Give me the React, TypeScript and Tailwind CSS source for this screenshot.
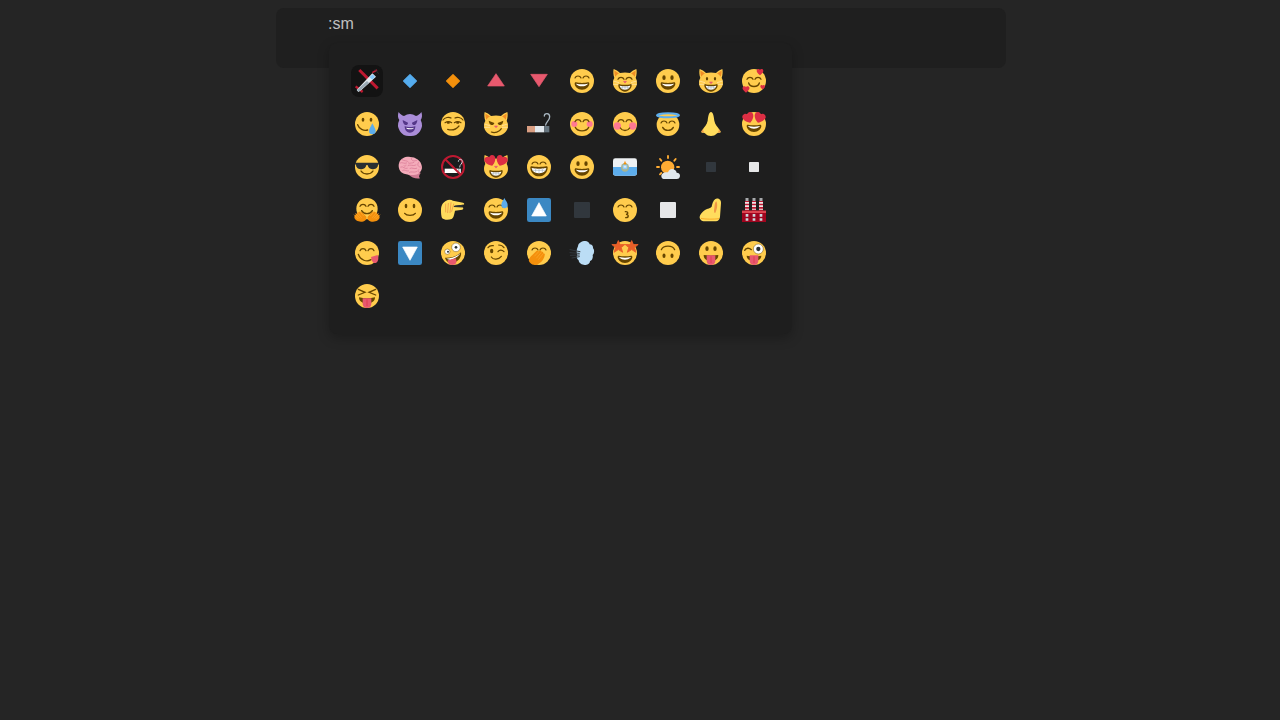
import React from "react";

const Y = "#FFCC4D";
const D = "#664500";
const R = "#DD2E44";

function S({ children }: { children: React.ReactNode }) {
  return (
    <svg viewBox="0 0 36 36" className="w-6 h-6 block overflow-visible">
      {children}
    </svg>
  );
}

const Face = () => <circle cx="18" cy="18" r="18" fill={Y} />;
const Eyes = ({ y = 13, rx = 2.5, ry = 3.5 }: { y?: number; rx?: number; ry?: number }) => (
  <>
    <ellipse cx="12" cy={y} rx={rx} ry={ry} fill={D} />
    <ellipse cx="24" cy={y} rx={rx} ry={ry} fill={D} />
  </>
);
const Arch = ({ y = 15, c = D, w = 1.8 }: { y?: number; c?: string; w?: number }) => (
  <g fill="none" stroke={c} strokeWidth={w} strokeLinecap="round">
    <path d={`M7.5 ${y + 1.5}C9 ${y - 2.5} 15 ${y - 2.5} 16.5 ${y + 1.5}`} />
    <path d={`M19.5 ${y + 1.5}C21 ${y - 2.5} 27 ${y - 2.5} 28.5 ${y + 1.5}`} />
  </g>
);
const Grin = ({ t = 0 }: { t?: number }) => (
  <g transform={`translate(0 ${t})`}>
    <path fill={D} d="M18 21c-3.623 0-6.027-.422-9-1-.679-.131-2 0-2 2 0 4 4.595 9 11 9 6.404 0 11-5 11-9 0-2-1.321-2.132-2-2-2.973.578-5.377 1-9 1z" />
    <path fill="#FFF" d="M9 22s3 1 9 1 9-1 9-1-2 4-9 4-9-4-9-4z" />
  </g>
);
const Smile = ({ d = "M9 22C12 29 24 29 27 22" }: { d?: string }) => (
  <path d={d} fill="none" stroke={D} strokeWidth="2" strokeLinecap="round" />
);
const Tongue = ({ x = 18, y = 25 }: { x?: number; y?: number }) => (
  <g transform={`translate(${x} ${y})`}>
    <path fill="#E8596E" d="M-6.5 -3.5L6.5 -3.5L6.5 5C6.5 8.5 3.5 11 0 11S-6.5 8.5 -6.5 5Z" />
    <path fill="#DD2E44" d="M-.5 -2H.5V8H-.5Z" />
  </g>
);
const HeartEyes = () => (
  <g fill={R}>
    <path d="M16.65 3.281C15.791.85 13.126-.426 10.694.431c-1.476.52-2.521 1.711-2.928 3.104-1.191-.829-2.751-1.1-4.225-.58C1.111 3.813-.167 6.48.692 8.911c.122.344.284.663.472.958 1.951 3.582 7.588 6.1 11.001 6.131 2.637-2.167 5.446-7.665 4.718-11.677-.038-.348-.113-.698-.233-1.042z" />
    <path d="M19.35 3.281C20.209.85 22.875-.426 25.306.431c1.476.52 2.521 1.711 2.929 3.104 1.191-.829 2.751-1.1 4.225-.58 2.43.858 3.707 3.525 2.85 5.956-.123.344-.284.663-.473.958-1.951 3.582-7.588 6.1-11 6.131-2.638-2.167-5.447-7.665-4.719-11.677.038-.348.113-.698.232-1.042z" />
  </g>
);
const Heart = ({ x, y, s }: { x: number; y: number; s: number }) => (
  <path
    transform={`translate(${x} ${y}) scale(${s}) translate(-5 -5)`}
    fill={R}
    d="M5 10C1.5 7 0 5.2 0 3.2A2.8 2.8 0 0 1 5 1.6A2.8 2.8 0 0 1 10 3.2C10 5.2 8.5 7 5 10Z"
  />
);
const Cat = ({ whisk = true }: { whisk?: boolean }) => (
  <>
    <path fill={Y} d="M35 0C36 4 35.500 9 34 13.500 35.300 15.500 36 18 36 21 36 29 28 36 18 36S0 29 0 21C0 18 .7 15.500 2 13.500 .5 9 0 4 1 0 4 1 8 3.500 10.500 6 15 4.800 21 4.800 25.500 6 28 3.500 32 1 35 0Z" />
    <path fill="#F18F26" d="M2.200 2.200C4 3.400 7 5 9 6.800 7 7.800 4.800 9.500 3.500 11.500 2.500 9 1.800 5 2.200 2.200ZM33.800 2.200C32 3.400 29 5 27 6.800 29 7.800 31.200 9.500 32.500 11.500 33.500 9 34.200 5 33.800 2.200Z" />
    {whisk && (
      <path fill="none" stroke="#FFE8B6" strokeWidth="1" d="M.5 18L9 20.500M.2 23L9 23M27 20.500L35.500 18M27 23L35.800 23" />
    )}
  </>
);
const Nose = ({ y = 19 }: { y?: number }) => <path fill="#E75A70" d={`M15.8 ${y}H20.200L18 ${y + 2.600}Z`} stroke="#E75A70" strokeLinejoin="round" />;
const CatGrin = () => (
  <>
    <path fill={D} d="M18 23.500c-3.500 0-6-.300-8.500-.800-.700-.100-1.500.300-1.500 1.800C8 29 12.500 34 18 34s10-5 10-9.500c0-1.500-.800-1.900-1.500-1.800-2.500.500-5 .800-8.500.800z" />
    <path fill="#FFF" d="M10 25s3 .900 8 .900 8-.900 8-.900-1.500 6-8 6-8-6-8-6z" />
    <path fill="none" stroke="#99AAB5" strokeWidth=".7" d="M10.500 28h15M14 25.500v5M18 25.500v5.500M22 25.500v5" />
  </>
);
const FingerHand = ({ x, flip = false }: { x: number; flip?: boolean }) => (
  <g transform={`translate(${x} 0) scale(${flip ? -1 : 1} 1)`}>
    <path fill="#F4900C" d="M0 35.500C-5 35.500-9.500 33-10 29-10 26-6 22.500-3 21-1 20 2 21 3 23L8 28C9 33 5 35.500 0 35.500Z" />
    <path fill="none" stroke="#FFAC33" strokeWidth="1" d="M-10.500 25L-4 31.500M-8.500 23L-1.500 30.500M-6 21L1 29.500M-2 20L4 27" />
  </g>
);
const Star = ({ x, y, s = 1 }: { x: number; y: number; s?: number }) => (
  <path
    transform={`translate(${x} ${y}) scale(${s})`}
    fill="#E95F28"
    stroke="#E95F28"
    strokeLinejoin="round"
    d="M0 -7L2 -2.400 7.500 -2.500 3.300 1 5 6.500 0 3.400-5 6.500-3.300 1-7.500-2.500-2-2.400Z"
  />
);

const emojis: React.ReactNode[] = [
  <S>
    <path stroke="#BE1931" strokeWidth="4.500" d="M6.500 1.500L34 29" fill="none" />
    <path stroke="#BE1931" strokeWidth="3.500" d="M1 26L11.500 34.500" fill="none" />
    <path fill="#E1E8ED" d="M26 6.500L31.500 11.500 10 31 5 34.500 2.500 31.500Z" />
    <path fill="#99AAB5" d="M3 31.500L18 18 21 21 5.500 34Z" />
    <path fill="#88C9F9" d="M26.500 8L30 11.500 26 16 21.500 12.500Z" />
    <path stroke="#BE1931" strokeWidth="2.400" d="M26 5.500L33 1.500" fill="none" />
    <path stroke="#292F33" strokeWidth="1.400" d="M30 .5L35.500 7" fill="none" />
  </S>,
  <S><path fill="#55ACEE" stroke="#55ACEE" strokeWidth="2" strokeLinejoin="round" d="M18 8.500L27.500 18 18 27.500 8.500 18Z" /></S>,
  <S><path fill="#F4900C" stroke="#F4900C" strokeWidth="2" strokeLinejoin="round" d="M18 8.500L27.500 18 18 27.500 8.500 18Z" /></S>,
  <S><path fill="#E8596E" stroke="#E8596E" strokeWidth="1" strokeLinejoin="round" d="M18 7L30.500 25.500H5.500Z" /></S>,
  <S><path fill="#E8596E" stroke="#E8596E" strokeWidth="1" strokeLinejoin="round" d="M18 26.500L30.500 8H5.500Z" /></S>,
  <S><Face /><Arch y={12} /><Grin /></S>,
  <S><Cat /><Arch y={14} /><Nose y={18.500} /><CatGrin /></S>,
  <S><Face /><Eyes /><Grin /></S>,
  <S><Cat /><Eyes y={14.500} rx={1.700} ry={2.600} /><Nose y={19.500} /><CatGrin /></S>,
  <S><Face /><Arch y={14} /><Smile d="M10 21C12 28 24 28 26 21" /><Heart x={27} y={4.500} s={1} /><Heart x={6} y={30.500} s={1.050} /><Heart x={31} y={27} s={0.700} /></S>,
  // row 2
  <S>
    <Face />
    <Eyes y={11.500} rx={2} ry={3} />
    <path d="M4 19C6 25 13 29 19 27" fill="none" stroke={D} strokeWidth="2" strokeLinecap="round" />
    <path fill="#5DADEC" d="M26 17C23 23 21 26 21 28.500A5 5 0 0 0 31 28.500C31 26 28.500 22 26 17Z" />
  </S>,
  <S>
    <path fill="#AA8DD8" d="M1 0C-.5 4-.5 9 2 12A16.500 16.500 0 0 0 18 36 16.500 16.500 0 0 0 34 12C36.500 9 36.500 4 35 0 33 3 30 5.500 27 6A16.500 16.500 0 0 0 9 6C6 5.500 3 3 1 0Z" />
    <path fill="#553788" d="M10 21C10 28 14 31 18 31S26 28 26 21C22 23 14 23 10 21Z" />
    <path fill="#FFF" d="M12 23.500C15 24.500 21 24.500 24 23.500 23 25.500 21 26 18 26S13 25.500 12 23.500Z" />
    <path fill="#553788" d="M7 12L15 16C15 19 13 20 11 19.500S7 16 7 12ZM29 12L21 16C21 19 23 20 25 19.500S29 16 29 12Z" />
  </S>,
  <S>
    <Face />
    <g fill="none" stroke={D} strokeWidth="1.800" strokeLinecap="round">
      <path d="M3 12C6 8 12 7 15 9" /><path d="M21 9C24 7 30 8 33 12" />
      <path d="M6 16C9 14 13 14 16 16" /><path d="M20 16C23 14 27 14 30 16" />
      <path d="M10 26C16 28 22 27 27 21" />
    </g>
    <ellipse cx="11" cy="16" rx="2.200" ry="1.800" fill={D} /><ellipse cx="25" cy="16" rx="2.200" ry="1.800" fill={D} />
  </S>,
  <S>
    <Cat />
    <path fill={D} d="M7 13L15.500 16.500C15 19 13 20 11 19.500S7.500 16.500 7 13ZM29 13L20.500 16.500C21 19 23 20 25 19.500S28.500 16.500 29 13Z" />
    <Nose y={21} />
    <path d="M11 30C16 32 23 30 26 25" fill="none" stroke={D} strokeWidth="1.800" strokeLinecap="round" />
  </S>,
  <S>
    <path fill="#D99E82" d="M0 21H12V30.500H0Z" />
    <path fill="#E1E8ED" d="M12 21H26V30.500H12Z" />
    <path fill="#66757F" d="M26 21H33.500V30.500H26Z" />
    <path fill="none" stroke="#AAB8C2" strokeWidth="2" strokeLinecap="round" d="M28 19.500C28 15 34 13.500 34 7 34 1 26 1 26 6" />
  </S>,
  <S><Face /><circle cx="6.500" cy="18" r="4.500" fill="#FF7892" /><circle cx="29.500" cy="18" r="4.500" fill="#FF7892" /><Arch y={13} /><Smile d="M8 23C12 30 24 30 28 23" /></S>,
  <S><Face /><circle cx="6.500" cy="21" r="5.500" fill="#FF7892" /><circle cx="29.500" cy="21" r="5.500" fill="#FF7892" /><Arch y={13} /><Smile d="M11 24C14 29 22 29 25 24" /></S>,
  <S>
    <circle cx="18" cy="19" r="17" fill={Y} />
    <Arch y={15} />
    <Smile d="M10 23C13 29 23 29 26 23" />
    <ellipse cx="18" cy="5" rx="16.500" ry="3" fill={Y} stroke="#5DADEC" strokeWidth="3" />
  </S>,
  <S>
    <path fill="#FFDC5D" d="M18 0C15 0 14 6 13 13 12 19 8 22 5 27 3 29 3 31.500 5 31 7 31 9 31 10 33 12 35 14 36 18 36 22 36 24 35 26 33 27 31 30 31 31 31 33 31.500 33 29 31 27 28 22 24 19 23 13 22 6 21 0 18 0Z" />
    <path fill="#EF9645" d="M3.500 29C5 27 6 26 6.500 25.500 6 27 6 29 8.500 31 6.500 30.500 4.500 31 3.500 29ZM32.500 29C31 27 30 26 29.500 25.500 30 27 30 29 27.500 31 29.500 30.500 31.500 31 32.500 29Z" />
  </S>,
  <S><Face /><HeartEyes /><Grin t={-1} /></S>,
  // row 3
  <S>
    <Face />
    <Smile d="M9 24C13 30 23 30 27 24" />
    <path fill="#292F33" d="M0 11.500H36V14C36 14 35 14 34.500 15 34 20 30 21.500 26 21.500 22 21.500 19.500 18 19 15.500 18.500 14.800 17.500 14.800 17 15.500 16.500 18 14 21.500 10 21.500 6 21.500 2 20 1.500 15 1 14 0 14 0 14Z" />
  </S>,
  <S>
    <path fill="#CE7A92" d="M15 29C20 34 27 36 33 35 31 33 31 31 34 27L18 25Z" />
    <path fill="#F4ABBA" d="M2 11C4 5 12 2 18 3 26 3 35 8 36 18 36 25 30 30 24 30 17 30 14 29 9 28 3 27-1 18 2 11Z" />
    <path fill="none" stroke="#D87A95" strokeWidth="1.100" strokeLinecap="round" d="M3 12C7 10 9 14 13 12M6 7C9 10 14 7 16 11M15 16C19 13 22 18 27 15M20 5C20 10 25 9 28 8M31 11C28 14 30 19 35 18M4 18C8 16 10 22 14 20M7 23C10 21 12 25 16 24M18 20C21 18 24 22 28 20M17 26C20 24 24 27 28 25M31 22C29 24 30 26 33 26M24 11C22 13 18 11 16 13M9 16C10 18 12 17 12 15" />
  </S>,
  <S>
    <circle cx="18" cy="18" r="16.500" fill="#1A1C1E" stroke="#BE1931" strokeWidth="3" />
    <path fill="#FFF" d="M5.500 20.500H26V27H5.500Z" />
    <path fill="#CCD6DD" d="M26 20.500H30V27H26Z" />
    <path fill="none" stroke="#CCD6DD" strokeWidth="1.500" strokeLinecap="round" d="M28 18C28 14 32 13.500 32 9.500 32 5.500 26 5.500 26 9.500" />
    <path stroke="#BE1931" strokeWidth="3" d="M6 6L30 30" />
  </S>,
  <S><Cat whisk={false} /><HeartEyes /><Nose y={17} /><CatGrin /></S>,
  <S>
    <Face />
    <Arch y={12} />
    <path fill={D} d="M18 18c-4 0-8-.500-11-1-.700-.100-2 0-2 2 0 6 5 13 13 13s13-7 13-13c0-2-1.300-2.100-2-2-3 .500-7 1-11 1z" />
    <path fill="#FFF" d="M7 19.500s4 1 11 1 11-1 11-1-1 8-11 8-11-8-11-8z" />
    <path fill="none" stroke="#99AAB5" strokeWidth=".8" d="M7.500 23H28.500M13 20.500V27M18 20.500V28M23 20.500V27" />
  </S>,
  <S><Face /><Eyes /><Grin /></S>,
  <S>
    <rect y="5" width="36" height="26" rx="3.500" fill="#EEF1F3" />
    <path fill="#5DADEC" d="M0 18H36V27.500A3.500 3.500 0 0 1 32.500 31H3.500A3.500 3.500 0 0 1 0 27.500Z" />
    <ellipse cx="18" cy="18.500" rx="6" ry="6.500" fill="#A9B48F" />
    <rect x="14.500" y="14.500" width="7" height="7" rx="1.500" fill="#88C9F9" />
    <path fill="#F4900C" d="M18 8.500L20.200 14H15.800Z" />
    <path fill="#E1E8ED" d="M16 16H20V19H16Z" />
  </S>,
  <S>
    <circle cx="17.500" cy="18.500" r="10" fill="#FFAC33" />
    <g stroke="#FFAC33" strokeWidth="2.800" strokeLinecap="round">
      <path d="M18 1.500V4.500M6 6L8 8.500M29.500 6L27.500 8.500M1.500 18H4.500M31.500 18H34.500M6 29L8 27" />
    </g>
    <path fill="#E1E8ED" d="M11.500 36H31C34 36 36 34 36 31 36 28 34 26.500 31 26.500 30.500 23 27 21 24 21 21 21 19 23 18 26 14 25 8 27 8 31.500 8 34 9.500 36 11.500 36Z" />
  </S>,
  <S><rect x="10.500" y="10.500" width="15" height="15" rx="1" fill="#31373D" /></S>,
  <S><rect x="10.500" y="10.500" width="15" height="15" rx="1" fill="#E6E7E8" /></S>,
  // row 4
  <S>
    <circle cx="18" cy="16" r="16" fill={Y} />
    <Arch y={11} />
    <Smile d="M10 19C13 25 23 25 26 19" />
    <FingerHand x={9} />
    <FingerHand x={27} flip />
  </S>,
  <S><Face /><Eyes y={12} rx={2} ry={3.500} /><Smile d="M10 23C13 27 23 27 26 23" /></S>,
  <S>
    <path fill="#FFDC5D" d="M0 18C0 11 3 7 7 4.500 11 2 15 2 18 4L33 7C35.500 7.500 35.500 10 33 10L21 11.500 19 13.500 32 14C34 14.300 34 17 32 17.500L21 19C20 24 19 30 16 31.500 11 33.500 4 33 1.500 30 .5 27 0 24 0 18Z" />
    <path fill="none" stroke="#EF9645" strokeWidth="1.200" strokeLinecap="round" d="M11 8L10 22M15 7L13.500 22M7 9L7 21M19 9L16 20" />
    <path fill="#292F33" d="M20 11.500L33 10 32 14 19 13.500Z" />
  </S>,
  <S>
    <Face />
    <Arch y={12} />
    <Grin />
    <path fill="#5DADEC" d="M30.500 0C28.500 4 26 7 26 10.500A4.700 4.700 0 0 0 35.500 10.500C35.500 7 32.500 4 30.500 0Z" />
  </S>,
  <S><rect width="36" height="36" rx="3.500" fill="#3B88C3" /><path fill="#FFF" d="M18 7L29 27H7Z" stroke="#FFF" strokeLinejoin="round" /></S>,
  <S><rect x="6" y="6" width="24" height="24" rx="1.500" fill="#31373D" /></S>,
  <S>
    <Face />
    <Arch y={12} />
    <path fill="none" stroke={D} strokeWidth="2" strokeLinecap="round" d="M18.500 20.500C23 20 23.500 24 19.500 24.500 24 25 24 29.500 19 29.500" />
  </S>,
  <S><rect x="6" y="6" width="24" height="24" rx="1.500" fill="#E6E7E8" /></S>,
  <S>
    <path fill="#FFDC5D" d="M26 1C30 .5 33.500 3 33 8L31.500 28C31 32 29 35 24 35H9C3 35 .5 31 1 28 1.500 25 5 21 9 18 13 15 17 16 19 13 20 8 22 1.500 26 1Z" />
    <path fill="#EF9645" d="M26 5C28.500 9 27 18 24.500 22 23 24 22 20 23 15 23.500 10 24 6 26 5Z" />
    <path fill="none" stroke="#F4900C" strokeWidth="1" d="M3 30.500C9 32 22 32 30 31" />
  </S>,
  <S>
    <path fill="#A0041E" d="M0 19H36V36H0Z" />
    <path fill="#DD4450" d="M0 19H36V22.500H0Z" />
    <path fill="#BE1931" d="M4.500 4.500H10.500V19H4.500ZM15 4.500H21V19H15ZM25.500 4.500H31.500V19H25.500Z" />
    <path fill="#F0E4E6" d="M4.500 6H10.500V8.500H4.500ZM15 6H21V8.500H15ZM25.500 6H31.500V8.500H25.500ZM4.500 11H10.500V13.500H4.500ZM15 11H21V13.500H15ZM25.500 11H31.500V13.500H25.500ZM4.500 16H10.500V17.500H4.500ZM15 16H21V17.500H15ZM25.500 16H31.500V17.500H25.500Z" />
    <path fill="#A7A9AC" d="M5.250 0H9.750V4.500H5.250ZM15.750 0H20.250V4.500H15.750ZM26.250 0H30.750V4.500H26.250Z" />
    <path fill="#CCD6DD" d="M5.500 24H9.500V28H5.500ZM16 24H20V28H16ZM26.500 24H30.500V28H26.500ZM5.500 30.500H9.500V34H5.500ZM16 30.500H20V34H16ZM26.500 30.500H30.500V34H26.500Z" />
  </S>,
  // row 5
  <S>
    <Face />
    <Arch y={13} />
    <path d="M5 20C8 29 18 32 24 28" fill="none" stroke={D} strokeWidth="2" strokeLinecap="round" />
    <path fill="#E8596E" d="M24 24L34 21C36 26 35 31 31 33 27 34 25 30 24 24Z" />
  </S>,
  <S><rect width="36" height="36" rx="3.500" fill="#3B88C3" /><path fill="#FFF" d="M18 29L29 9H7Z" stroke="#FFF" strokeLinejoin="round" /></S>,
  <S>
    <Face />
    <circle cx="9.500" cy="16" r="4" fill="#FFF" stroke={D} strokeWidth=".7" />
    <circle cx="10.500" cy="16" r="1.500" fill="#292F33" />
    <circle cx="22.500" cy="9.500" r="6.500" fill="#FFF" stroke={D} strokeWidth=".7" />
    <circle cx="22.500" cy="9.500" r="2" fill="#292F33" />
    <path fill={D} d="M6 25C11 26 23 24 30 17 31 23 27 31 18 33 12 34 7 30 6 25Z" />
    <path fill="#FFF" d="M8 26.500C14 26 23 24 29 18.500 28 21 22 26.500 14 28.500Z" />
    <path fill="#E8596E" d="M10 29L22 26C24 30 24 36 17 36 12 36 10 33 10 29Z" />
  </S>,
  <S>
    <Face />
    <ellipse cx="11.500" cy="15" rx="2.500" ry="3.500" fill={D} />
    <g fill="none" stroke={D} strokeWidth="1.800" strokeLinecap="round">
      <path d="M6 10C8 7 11 6.500 14 7" />
      <path d="M21 16C23 13 27 13 30 16" />
      <path d="M22 6C25 6 28 7 30 10" />
      <path d="M11 24C14 29 22 28 26 23" />
    </g>
  </S>,
  <S>
    <Face />
    <Arch y={12} />
    <path fill="#F4900C" d="M5 33C1 30 3 26 6 23L14 15C16 13 18 15 17 16L19 14.500C21 13.500 22.500 15.500 21.500 16.500 23.500 15.500 25.500 17.500 24 19 26 18 27.500 20 26.500 21.500 26 26 22 33 15 35.500 11 36.500 7 35.500 5 33Z" />
    <path fill="none" stroke="#FFAC33" strokeWidth=".9" d="M11 23L17 16.500M14 26L21.500 17M17 28L24 19.500" />
  </S>,
  <S>
    <path fill="#BBDDF5" d="M12 8C12 3 18 0 23 0 26 0 29 2 29.500 5 33 5 35 8 34.500 11 37 13 36.500 19 34 21 35 25 33 29 30 30 30 34 26 36 22 36 18 36 13 33 13 29 10 27 9.500 23 11 21 9.500 18 9.500 13 12 8Z" />
    <path fill="none" stroke="#31373D" strokeWidth="1.500" strokeLinecap="round" d="M0 13L15 16M0 17.500L14 18.500M.5 21.500L14 21M3 25.500L14 23.500" />
  </S>,
  <S>
    <Face />
    <Grin t={2} />
    <Star x={8} y={8.500} s={1.300} />
    <Star x={28} y={8.500} s={1.300} />
  </S>,
  <S>
    <Face />
    <ellipse cx="12" cy="22" rx="2.300" ry="3.400" fill={D} />
    <ellipse cx="24" cy="22" rx="2.300" ry="3.400" fill={D} />
    <Smile d="M8 13C11 6 25 6 28 13" />
  </S>,
  <S>
    <Face />
    <Eyes y={11.500} />
    <path fill={D} d="M7 21C14 22 22 22 29 21 29 27 24 30 18 30S7 27 7 21Z" />
    <Tongue x={18} y={25} />
  </S>,
  <S>
    <Face />
    <path d="M4 14C6 10 11 10 14 13" fill="none" stroke={D} strokeWidth="2" strokeLinecap="round" />
    <circle cx="24.500" cy="12" r="7.500" fill="#FFF" stroke={D} strokeWidth=".7" />
    <circle cx="24.500" cy="12" r="3.200" fill="#292F33" />
    <path fill={D} d="M7 22C14 23 22 23 29 22 29 27 24 30 18 30S7 27 7 22Z" />
    <Tongue x={18} y={25} />
  </S>,
  // row 6
  <S>
    <Face />
    <g fill="none" stroke={D} strokeWidth="2" strokeLinecap="round">
      <path d="M5 8L15 12.500L5 16.500" /><path d="M31 8L21 12.500L31 16.500" />
    </g>
    <path fill={D} d="M6 20C14 22 22 22 30 20 30 26 25 29 18 29S6 26 6 20Z" />
    <Tongue x={18} y={25} />
  </S>,
];

export default function App() {
  return (
    <div className="min-h-screen bg-[#252525] pt-2 font-['Liberation_Sans',Arial,sans-serif]">
      <div className="relative ml-[276px] h-[60px] w-[730px] rounded-lg bg-[#1f1f1f] pl-[52px] pt-1 text-base text-[#c0c0c0]">
        <div>:sm</div>
        <div className="absolute left-[53px] top-[35px] grid w-[463px] grid-cols-[repeat(10,32px)] gap-[11px] rounded-lg bg-[#1e1e1e] p-[22px] shadow-[0_4px_12px_rgba(0,0,0,0.25)]">
          {emojis.map((e, i) => (
            <div key={i} className={`flex h-8 w-8 items-center justify-center rounded-lg ${i === 0 ? "bg-[#131313]" : ""}`}>
              {e}
            </div>
          ))}
        </div>
      </div>
    </div>
  );
}
